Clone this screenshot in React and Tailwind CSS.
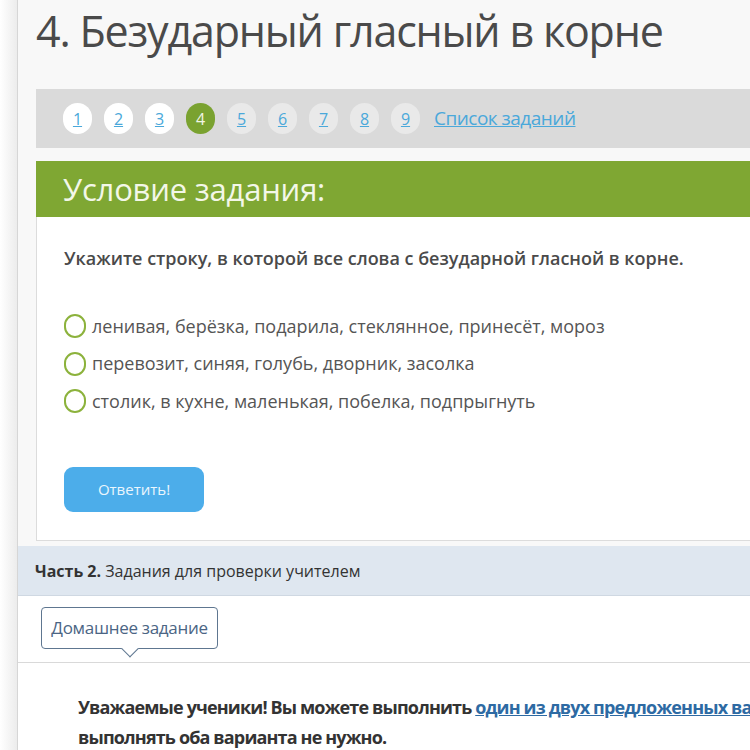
import React, { useState } from "react";

const tasks = [1, 2, 3, 4, 5, 6, 7, 8, 9];

const options = [
  "ленивая, берёзка, подарила, стеклянное, принесёт, мороз",
  "перевозит, синяя, голубь, дворник, засолка",
  "столик, в кухне, маленькая, побелка, подпрыгнуть",
];

const App = () => {
  const [current] = useState(4);
  const [answer, setAnswer] = useState(null);

  return (
    <div className="flex min-h-[750px] bg-white font-['Open_Sans',sans-serif] overflow-hidden">
      {/* left gutter */}
      <div className="w-[17px] shrink-0 bg-gradient-to-r from-white to-[#ececec]" />

      <div className="flex-1 min-w-0 bg-[#f8f8f8] border-l border-[#d6d6d6]">
        {/* Part 1 */}
        <div className="pl-[18px]">
          <h1 className="text-[43px] leading-[62px] h-[89px] text-[#4a4a4a] tracking-[-1.2px]">
            4. Безударный гласный в корне
          </h1>

          {/* Task numbers */}
          <div className="h-[59px] bg-[#dadada] flex items-center pl-[27px] gap-[12px]">
            {tasks.map((n) => (
              <a
                key={n}
                href="#"
                className={`w-[29px] h-[31px] rounded-full flex items-center justify-center text-[16px] ${
                  n === current
                    ? "bg-[#7aa230] text-[#f0f5e4]"
                    : n < current
                    ? "bg-white text-[#4aa8da] underline"
                    : "bg-[#e9e9e9] text-[#4aa8da] underline"
                }`}
              >
                {n}
              </a>
            ))}
            <a href="#" className="ml-[2px] text-[19px] text-[#4aa8da] underline tracking-[-0.5px]">
              Список заданий
            </a>
          </div>

          <div className="mt-[13px] border border-[#dcdcdc] border-r-0 bg-white">
            <div className="h-[56px] bg-[#7fa733] flex items-center pl-[27px] -mt-px -ml-px">
              <span className="text-[31px] text-[#f3f7e8] tracking-[-0.2px]">Условие задания:</span>
            </div>
            <div className="pl-[27px] pt-[28px] pb-[28px]">
              <p className="text-[18px] font-semibold text-[#4a4a4a]">
                Укажите строку, в которой все слова с безударной гласной в корне.
              </p>
              <div className="mt-[42px] flex flex-col gap-[13.5px]">
                {options.map((o, i) => (
                  <label key={i} className="flex items-center gap-[6px] cursor-pointer h-[24px]">
                    <span
                      onClick={() => setAnswer(i)}
                      className={`w-[22px] h-[24px] shrink-0 rounded-full border-[2.5px] border-[#8cb23c] ${
                        answer === i ? "bg-[#8cb23c]" : ""
                      }`}
                    />
                    <span className="text-[18px] text-[#555]">{o}</span>
                  </label>
                ))}
              </div>
              <button className="mt-[54px] w-[140px] h-[45px] rounded-[9px] bg-[#4cadea] text-[15px] text-[#eaf6fd]">
                Ответить!
              </button>
            </div>
          </div>
        </div>

        {/* Part 2 */}
        <div className="mt-[5px] h-[50px] bg-[#dfe7f0] border-b border-[#cfd8e2] flex items-center pl-[17px] text-[16px] text-[#333]">
          <b className="font-bold">Часть 2.</b>&nbsp;Задания для проверки учителем
        </div>

        <div className="bg-white">
          <div className="h-[67px] border-b border-[#d9d9d9] pt-[11px] pl-[23px]">
            <div className="relative w-[177px] h-[42px] border border-[#5e7690] rounded-[4px] flex items-center justify-center text-[17px] text-[#4b6584] tracking-[-0.3px]">
              Домашнее задание
              <span className="absolute left-[82px] -bottom-[7px] w-[12px] h-[12px] bg-white border-r border-b border-[#5e7690] rotate-45" />
            </div>
          </div>
          <div className="pl-[60px] pt-[29px] text-[18px] font-bold text-[#333] leading-[30px] tracking-[-0.85px] whitespace-nowrap overflow-hidden">
            Уважаемые ученики! Вы можете выполнить{" "}
            <a href="#" className="text-[#2d6aa3] underline">
              один из двух предложенных вариантов
            </a>
            <br />
            выполнять оба варианта не нужно.
          </div>
        </div>
      </div>
    </div>
  );
};

export default App;
